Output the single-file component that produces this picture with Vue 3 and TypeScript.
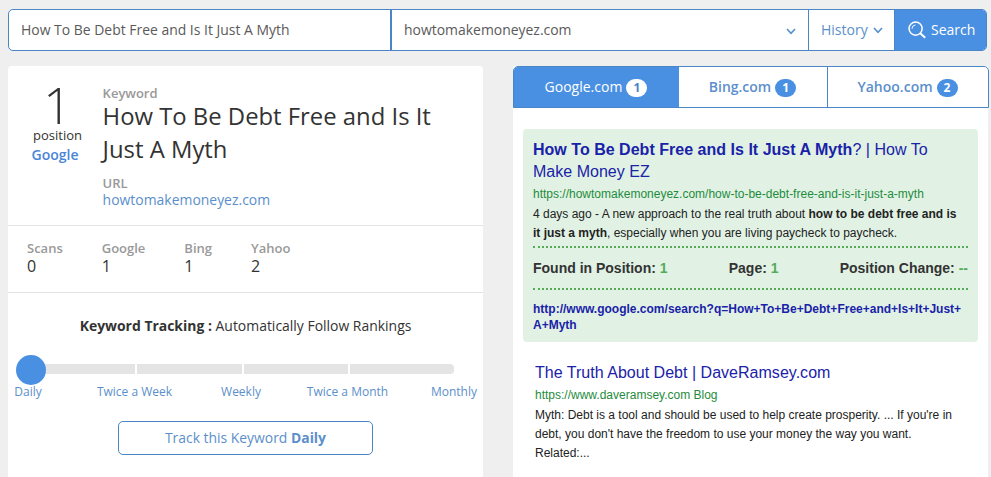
<template>
  <div class="page">
    <form class="search-bar" @submit.prevent>
      <input v-model="keyword" class="search-keyword" type="text" />
      <div class="search-domain">
        <input v-model="domain" type="text" />
        <svg class="chevron" viewBox="0 0 10 7"><path d="M1 1l4 4.4L9 1" /></svg>
      </div>
      <button type="button" class="history">
        <span>History</span>
        <svg class="chevron" viewBox="0 0 10 7"><path d="M1 1l4 4.4L9 1" /></svg>
      </button>
      <button type="submit" class="submit">
        <svg class="magnifier" viewBox="0 0 20 20">
          <circle cx="8" cy="8" r="6.9" />
          <path d="M4.2 8.2a4 4 0 0 1 3.6-4" class="glint" />
          <path d="M12.9 12.9l5.2 4.8" class="handle" />
        </svg>
        <span>Search</span>
      </button>
    </form>

    <div class="columns">
      <section class="panel">
        <div class="summary">
          <div class="rank">
            <div class="rank-number">1</div>
            <div class="rank-label">position</div>
            <div class="rank-engine">Google</div>
          </div>
          <div class="details">
            <div class="label">Keyword</div>
            <h1>{{ keyword }}</h1>
            <div class="label">URL</div>
            <a class="domain">{{ domain }}</a>
          </div>
        </div>

        <div class="stats">
          <div v-for="stat in stats" :key="stat.name" class="stat">
            <div class="label">{{ stat.name }}</div>
            <div class="stat-value">{{ stat.value }}</div>
          </div>
        </div>

        <div class="tracking">
          <p class="tracking-title"><b>Keyword Tracking :</b> <span>Automatically Follow Rankings</span></p>
          <div class="slider">
            <div class="track">
              <i v-for="n in 4" :key="n"></i>
            </div>
            <div class="knob" :style="{ left: `${selected * 25}%` }"></div>
          </div>
          <div class="frequencies">
            <span v-for="(item, i) in frequencies" :key="item" @click="selected = i">{{ item }}</span>
          </div>
          <button type="button" class="track-button">Track this Keyword <b>{{ frequencies[selected] }}</b></button>
        </div>
      </section>

      <section class="results">
        <nav class="tabs">
          <button
            v-for="tab in tabs"
            :key="tab.name"
            type="button"
            :class="[tab.key, { active: tab.key === activeTab }]"
            @click="activeTab = tab.key"
          >
            <span>{{ tab.name }}</span>
            <span class="badge">{{ tab.count }}</span>
          </button>
        </nav>

        <article class="result found">
          <h2><b>How To Be Debt Free and Is It Just A Myth</b>? | How To Make Money EZ</h2>
          <cite>https://howtomakemoneyez.com/how-to-be-debt-free-and-is-it-just-a-myth</cite>
          <p>4 days ago - A new approach to the real truth about <b>how to be debt free and is it just a myth</b>, especially when you are living paycheck to paycheck.</p>
          <div class="placement">
            <span>Found in Position: <em>1</em></span>
            <span>Page: <em>1</em></span>
            <span>Position Change: <em>--</em></span>
          </div>
          <a class="query">http://www.google.com/search?q=How+To+Be+Debt+Free+and+Is+It+Just+<wbr />A+Myth</a>
        </article>

        <article class="result">
          <h2>The Truth About Debt | DaveRamsey.com</h2>
          <cite>https://www.daveramsey.com Blog</cite>
          <p>Myth: Debt is a tool and should be used to help create prosperity. ... If you're in debt, you don't have the freedom to use your money the way you want. Related:...</p>
        </article>
      </section>
    </div>
  </div>
</template>

<script setup lang="ts">
import { ref } from 'vue'

interface Stat {
  name: string
  value: number
}

interface Tab {
  key: string
  name: string
  count: number
}

const keyword = ref('How To Be Debt Free and Is It Just A Myth')
const domain = ref('howtomakemoneyez.com')
const activeTab = ref('google')
const selected = ref(0)

const stats: Stat[] = [
  { name: 'Scans', value: 0 },
  { name: 'Google', value: 1 },
  { name: 'Bing', value: 1 },
  { name: 'Yahoo', value: 2 },
]

const tabs: Tab[] = [
  { key: 'google', name: 'Google.com', count: 1 },
  { key: 'bing', name: 'Bing.com', count: 1 },
  { key: 'yahoo', name: 'Yahoo.com', count: 2 },
]

const frequencies = ['Daily', 'Twice a Week', 'Weekly', 'Twice a Month', 'Monthly']
</script>

<style>
body {
  background: #efefef;
  overflow: hidden;
}
</style>

<style scoped>
* {
  box-sizing: border-box;
}

.page {
  height: 477px;
  padding: 9px 2px 0 8px;
  overflow: hidden;
  font-family: "Open Sans", "Noto Sans", sans-serif;
  color: #333;
}

button,
input {
  margin: 0;
  padding: 0;
  border: 0;
  outline: 0;
  background: none;
  font-family: inherit;
}

.search-bar {
  display: flex;
  width: 979px;
  height: 42px;
  border: 1px solid #4a86c5;
  border-radius: 5px;
  background: #fff;
  overflow: hidden;
}

.search-bar input {
  padding-bottom: 2px;
  font-size: 13.95px;
  color: #5a5a5a;
}

.search-bar .search-keyword {
  width: 383px;
  padding-left: 12px;
  border-right: 2px solid #4a86c5;
}

.search-domain {
  display: flex;
  align-items: center;
  width: 417px;
  padding: 0 12px;
  border-right: 1px solid #4a86c5;
}

.search-domain input {
  flex: 1;
}

.chevron {
  width: 10px;
  height: 7px;
  margin-top: 2px;
  fill: none;
  stroke: #5590cf;
  stroke-width: 1.6;
}

.history {
  display: flex;
  align-items: center;
  gap: 5px;
  width: 85px;
  padding: 0 0 1px 12px;
  font-size: 14px;
  color: #5b8fcb;
}

.submit {
  display: flex;
  flex: 1;
  align-items: center;
  gap: 4px;
  padding: 0 0 1px 13px;
  background: #4a90e2;
  border-left: 1px solid #4a86c5;
  font-size: 14px;
  color: #fff;
}

.magnifier {
  width: 19px;
  height: 19px;
  margin-top: 1px;
  fill: none;
  stroke: #fff;
  stroke-width: 1.6;
}

.magnifier .glint {
  stroke-width: 1;
}

.magnifier .handle {
  stroke-width: 2;
}

.columns {
  display: flex;
  gap: 30px;
  margin-top: 15px;
}

.panel {
  width: 475px;
  height: 420px;
  background: #fff;
  border-radius: 4px 4px 0 0;
}

.summary {
  display: flex;
  height: 160px;
  border-bottom: 1px solid #e3e3e3;
}

.rank {
  width: 94px;
  margin-right: 0.6px;
  padding-top: 15px;
  text-align: center;
}

.rank-number {
  height: 45px;
  padding-left: 5px;
  font-size: 50px;
  font-weight: 300;
  line-height: 49px;
}

.rank-label {
  padding-left: 5px;
  font-size: 13px;
  line-height: 18px;
}

.rank-engine {
  font-size: 14px;
  font-weight: 600;
  line-height: 21px;
  color: #4a86d5;
}

.details {
  padding-top: 18px;
}

.label {
  font-size: 13px;
  font-weight: 600;
  line-height: 18px;
  color: #999;
}

h1 {
  width: 350px;
  margin: -2px 0 8px;
  font-size: 23.85px;
  font-weight: 400;
  line-height: 33px;
}

.domain {
  display: block;
  font-size: 13.95px;
  line-height: 16px;
  color: #5b8fcb;
}

.stats {
  display: flex;
  gap: 39px;
  height: 67px;
  padding: 13px 19px 0;
  border-bottom: 1px solid #e3e3e3;
}

.stat-value {
  font-size: 16px;
  line-height: 19px;
}

.tracking {
  padding-top: 23px;
  text-align: center;
}

.tracking-title {
  margin: 0;
  font-size: 13.95px;
  line-height: 20px;
}

.slider {
  position: relative;
  width: 423px;
  margin: 28px 0 0 23px;
}

.track {
  display: flex;
  gap: 2px;
  height: 10px;
  border-radius: 4px;
  overflow: hidden;
}

.track i {
  flex: 1;
  background: #e4e4e4;
}

.knob {
  position: absolute;
  top: -9px;
  width: 30px;
  height: 30px;
  margin-left: -15px;
  border-radius: 50%;
  background: #4a90e2;
}

/* zero-width items keep every label centred on its stop */
.frequencies {
  display: flex;
  justify-content: space-between;
  margin: 9px 29px 0 20px;
  font-size: 12px;
  line-height: 17px;
  color: #5b8fcb;
}

.frequencies span {
  display: flex;
  justify-content: center;
  width: 0;
  white-space: nowrap;
  cursor: pointer;
}

.track-button {
  width: 255px;
  height: 34px;
  margin-top: 21px;
  padding-bottom: 1px;
  border: 1px solid #4a86c5;
  border-radius: 5px;
  font-size: 13.9px;
  color: #5b8fcb;
}

.results {
  width: 476px;
  height: 420px;
  background: linear-gradient(90deg, #fff 475px, #efefef 475px);
}

.tabs {
  display: flex;
  height: 42px;
  border: 1px solid #4a86c5;
  border-radius: 5px 5px 0 0;
  background: #fff;
  overflow: hidden;
}

.tabs button {
  display: flex;
  align-items: center;
  justify-content: center;
  gap: 4px;
  padding: 0 1px 1px 0;
  font-size: 14px;
  font-weight: 600;
  color: #5b8fcb;
}

.tabs .google {
  width: 165px;
}

.tabs .bing {
  width: 149px;
  border-right: 1px solid #4a86c5;
}

.tabs .yahoo {
  flex: 1;
}

.badge {
  width: 21px;
  height: 18px;
  margin-top: 3px;
  border-radius: 9px;
  background: #4a90e2;
  font-size: 12px;
  font-weight: 700;
  line-height: 17px;
  text-align: center;
  color: #fff;
}

.tabs .active {
  background: #4a90e2;
  font-weight: 400;
  color: #fff;
}

.active .badge {
  background: #fff;
  color: #4a86c5;
}

.result {
  margin: 20px 11px 0 12px;
  padding: 0 10px;
  font-family: "Liberation Sans", Arial, sans-serif;
  font-size: 12px;
}

.result.found {
  height: 213px;
  margin: 21px 11px 0 10px;
  padding-top: 10px;
  border-radius: 4px;
  background: #e1f2e5;
}

h2 {
  margin: 0;
  font-size: 16px;
  font-weight: 400;
  line-height: 22px;
  letter-spacing: 0.02px;
  color: #1a22a8;
}

cite {
  display: block;
  font-style: normal;
  line-height: 22px;
  color: #1e8c3c;
}

.result p {
  margin: 0;
  line-height: 19px;
  color: #222;
}

.found p {
  padding-right: 8px;
}

.placement {
  display: flex;
  justify-content: space-between;
  align-items: center;
  height: 44px;
  margin-top: 3px;
  border: dotted #55ab57;
  border-width: 2px 0;
  font-size: 14px;
  font-weight: 700;
}

.placement em {
  font-style: normal;
  color: #55ab57;
}

.query {
  display: block;
  margin-top: 11px;
  font-weight: 700;
  line-height: 16px;
  color: #1a22a8;
}
</style>
